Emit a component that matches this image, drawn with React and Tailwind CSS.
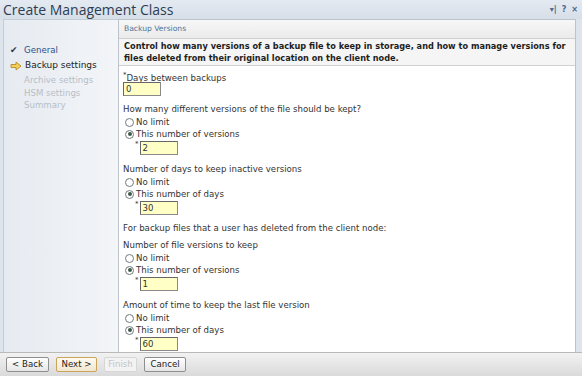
const font = { fontFamily: '"DejaVu Sans", Verdana, sans-serif' };

function Radio({ checked, label }) {
  return (
    <div className="flex h-[12px] items-center gap-[2px] pl-[2px]">
      <span className="flex h-[9px] w-[9px] items-center justify-center rounded-full border border-[#6f7a80] bg-white">
        {checked && <span className="h-[4px] w-[4px] rounded-full bg-[#3f5a4a]" />}
      </span>
      <span>{label}</span>
    </div>
  );
}

function Field({ value, indent }) {
  return (
    <div className={`flex items-start ${indent ? "pl-[12px]" : ""}`}>
      {indent && <span className="mr-[1px] text-[7px] leading-[6px]">*</span>}
      <div className="flex h-[14px] w-[38px] items-center border border-[#8a8a8a] border-t-[#666] border-l-[#666] bg-[#ffffc6] pl-[2px] leading-none">
        {value}
      </div>
    </div>
  );
}

function Group({ title, options, value }) {
  return (
    <div className="flex flex-col">
      <div className="h-[13px] leading-[13px]">{title}</div>
      <Radio label="No limit" />
      <Radio checked label={options} />
      <div className="mt-[1px]">
        <Field value={value} indent />
      </div>
    </div>
  );
}

export default function App() {
  return (
    <div
      className="flex h-[376px] w-[582px] flex-col overflow-hidden bg-[#dde4ec] text-[8.6px] text-[#333]"
      style={font}
    >
      <div className="flex h-[19px] shrink-0 items-center justify-between bg-gradient-to-b from-[#e4eaf1] to-[#d6dee8] pl-[3px] pr-[4px]">
        <span
          className="text-[14px] leading-none text-[#2c3d52]"
          style={{ fontFamily: '"Open Sans", "Noto Sans", sans-serif' }}
        >
          Create Management Class
        </span>
        <span className="flex items-center gap-[5px] text-[8px] font-bold text-[#4a6a90]">
          <span>▾|</span>
          <span>?</span>
          <span>×</span>
        </span>
      </div>

      <div className="flex min-h-0 flex-1 pl-[3px] pr-[6px]">
        <div className="flex w-[115px] shrink-0 flex-col border-t border-l border-[#c4ccd6] bg-gradient-to-r from-[#e6ebf1] to-[#f3f5f8] pt-[23px] pl-[6px] text-[8.6px]">
          <div className="flex h-[15px] items-center gap-[4px] text-[#2b4f86]">
            <span className="w-[10px] text-[9px] text-[#333]">✔</span>
            <span>General</span>
          </div>
          <div className="flex h-[15px] items-center gap-[3px] text-[#222]">
            <svg width="12" height="10" viewBox="0 0 12 10">
              <path d="M1 3.5h5V1l5 4-5 4V6.5H1z" fill="#f4cf5c" stroke="#b98a24" strokeWidth="0.9" strokeLinejoin="round" />
            </svg>
            <span className="text-[9px]">Backup settings</span>
          </div>
          <div className="flex flex-col pl-[14px] text-[#b7bec7]">
            <span className="h-[14px] leading-[14px]">Archive settings</span>
            <span className="h-[12px] leading-[12px]">HSM settings</span>
            <span className="h-[13px] leading-[13px]">Summary</span>
          </div>
        </div>

        <div className="flex min-w-0 flex-1 flex-col overflow-hidden border border-b-0 border-[#bcc3cb] bg-white">
          <div className="flex h-[19px] shrink-0 items-center border-b border-[#cfcfcf] bg-gradient-to-b from-[#f7f7f7] to-[#ebebeb] pl-[5px] text-[7.6px] text-[#4f7394]">
            Backup Versions
          </div>
          <div className="shrink-0 border-b border-[#d0d0d0] bg-[#f5f5f5] px-[5px] py-[1px] text-[8.2px] font-bold leading-[12px] text-[#1e1e1e]">
            Control how many versions of a backup file to keep in storage, and how to manage versions for files deleted from their original location on the client node.
          </div>
          <div className="flex shrink-0 flex-col pl-[4px] pt-[5px]">
            <div className="flex h-[12px] items-start leading-[14px]">
              <span className="text-[7px] leading-[8px]">*</span>
              <span>Days between backups</span>
            </div>
            <div className="mt-[-1px]">
              <Field value="0" />
            </div>
            <div className="mt-[7px]">
              <Group title="How many different versions of the file should be kept?" options="This number of versions" value="2" />
            </div>
            <div className="mt-[8px]">
              <Group title="Number of days to keep inactive versions" options="This number of days" value="30" />
            </div>
            <div className="mt-[7px] h-[13px] leading-[13px]">For backup files that a user has deleted from the client node:</div>
            <div className="mt-[4px]">
              <Group title="Number of file versions to keep" options="This number of versions" value="1" />
            </div>
            <div className="mt-[8px]">
              <Group title="Amount of time to keep the last file version" options="This number of days" value="60" />
            </div>
          </div>
        </div>
      </div>

      <div className="flex h-[24px] shrink-0 items-center gap-[7px] border-t border-[#b9b9b9] bg-gradient-to-b from-[#f2f2f2] to-[#dadada] pl-[6px] text-[8.6px]">
        <button className="h-[15px] w-[43px] rounded-[2px] border border-[#8f8f8f] bg-gradient-to-b from-white to-[#e6e6e6] text-[#222]">&lt; Back</button>
        <button className="h-[15px] w-[41px] rounded-[2px] border border-[#c9a45a] bg-gradient-to-b from-[#fffaf0] to-[#f1e6cf] text-[#222]">Next &gt;</button>
        <button className="h-[15px] w-[33px] rounded-[2px] border border-[#d6d6d6] bg-[#f3f3f3] text-[#c4c4c4]">Finish</button>
        <button className="h-[15px] w-[42px] rounded-[2px] border border-[#8f8f8f] bg-gradient-to-b from-white to-[#e6e6e6] text-[#222]">Cancel</button>
      </div>
    </div>
  );
}
